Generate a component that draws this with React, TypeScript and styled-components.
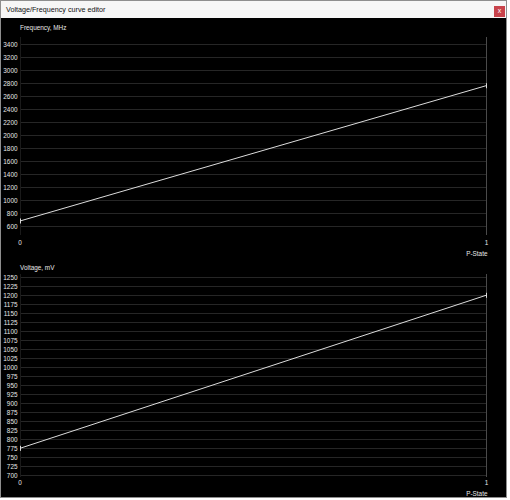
import styled, { createGlobalStyle } from "styled-components";

const GlobalStyle = createGlobalStyle`
  html, body {
    margin: 0;
    padding: 0;
    background: #ffffff;
  }
  body {
    font-family: "Liberation Sans", Arial, sans-serif;
  }
`;

const Window = styled.div`
  width: 505px;
  height: 496px;
  border: 1px solid #8e8e8e;
  display: flex;
  flex-direction: column;
  background: #000;
  overflow: hidden;
`;

const TitleBar = styled.div`
  height: 17px;
  flex: none;
  background: #f6f6f6;
  display: flex;
  align-items: center;
  justify-content: space-between;
  padding: 0 1px 0 5px;
`;

const TitleText = styled.span`
  font-size: 7.2px;
  color: #111;
  line-height: 10px;
  margin-top: 1px;
`;

const CloseButton = styled.div`
  width: 11px;
  height: 11px;
  margin-top: 3px;
  background: #c8434b;
  color: #fff;
  font-size: 7px;
  line-height: 10px;
  text-align: center;
`;

const Content = styled.div`
  flex: 1;
  display: flex;
  flex-direction: column;
  background: #000;
`;

const Panel = styled.div<{ $h: number }>`
  height: ${(p) => p.$h}px;
  flex: none;
  display: flex;
  flex-direction: column;
`;

const ChartTitle = styled.div`
  height: 9px;
  padding: 5px 0 0 19px;
  font-size: 6.4px;
  line-height: 9px;
  color: #e8e8e8;
`;

const Plot = styled.svg`
  display: block;
  flex: none;
  font-family: "Liberation Sans", Arial, sans-serif;
  font-size: 6.4px;
`;

type ChartProps = {
  title: string;
  height: number;
  ticks: number[];
  topVal: number;
  topY: number;
  bottomVal: number;
  bottomY: number;
  frameTop: number;
  frameBottom: number;
  xLabelY: number;
  start: number;
  end: number;
};

const LEFT = 19;
const RIGHT = 485;

function Chart(props: ChartProps) {
  const { ticks, topVal, topY, bottomVal, bottomY } = props;
  const svgH = props.height - 14;
  const toY = (v: number) =>
    bottomY + ((v - bottomVal) / (topVal - bottomVal)) * (topY - bottomY);
  const y0 = toY(props.start);
  const y1 = toY(props.end);

  return (
    <Panel $h={props.height}>
      <ChartTitle>{props.title}</ChartTitle>
      <Plot width={505} height={svgH} viewBox={`0 0 505 ${svgH}`}>
        {ticks.map((t) => (
          <g key={t}>
            <line
              x1={LEFT}
              x2={RIGHT}
              y1={Math.round(toY(t)) + 0.5}
              y2={Math.round(toY(t)) + 0.5}
              stroke="#262626"
              strokeWidth={1}
            />
            <text
              x={16.5}
              y={toY(t)}
              fill="#e8e8e8"
              textAnchor="end"
              dominantBaseline="central"
            >
              {t}
            </text>
          </g>
        ))}
        <line
          x1={LEFT + 0.5}
          x2={LEFT + 0.5}
          y1={props.frameTop}
          y2={props.frameBottom}
          stroke="#1a1a1a"
        />
        <line
          x1={RIGHT + 0.5}
          x2={RIGHT + 0.5}
          y1={props.frameTop}
          y2={props.frameBottom}
          stroke="#4a4a4a"
        />
        <line x1={LEFT} y1={y0} x2={RIGHT} y2={y1} stroke="#dcdcdc" strokeWidth={1} />
        <line x1={LEFT + 0.5} y1={y0 - 2.5} x2={LEFT + 0.5} y2={y0 + 2.5} stroke="#dcdcdc" />
        <line x1={RIGHT + 0.5} y1={y1 - 2.5} x2={RIGHT + 0.5} y2={y1 + 2.5} stroke="#dcdcdc" />
        <text
          x={LEFT}
          y={props.xLabelY}
          fill="#e8e8e8"
          textAnchor="middle"
          dominantBaseline="central"
        >
          0
        </text>
        <text
          x={RIGHT + 0.5}
          y={props.xLabelY}
          fill="#e8e8e8"
          textAnchor="middle"
          dominantBaseline="central"
        >
          1
        </text>
        <text
          x={RIGHT + 1.5}
          y={props.xLabelY + 11}
          fill="#e8e8e8"
          textAnchor="end"
          dominantBaseline="central"
        >
          P-State
        </text>
      </Plot>
    </Panel>
  );
}

const range = (from: number, to: number, step: number) => {
  const out: number[] = [];
  for (let v = from; v >= to; v -= step) out.push(v);
  return out;
};

export default function App() {
  return (
    <>
      <GlobalStyle />
      <Window>
        <TitleBar>
          <TitleText>Voltage/Frequency curve editor</TitleText>
          <CloseButton>x</CloseButton>
        </TitleBar>
        <Content>
          <Chart
            title="Frequency, MHz"
            height={240}
            ticks={range(3400, 600, 200)}
            topVal={3400}
            topY={12}
            bottomVal={600}
            bottomY={194}
            frameTop={5}
            frameBottom={203}
            xLabelY={210}
            start={677}
            end={2758}
          />
          <Chart
            title="Voltage, mV"
            height={239}
            ticks={range(1250, 700, 25)}
            topVal={1250}
            topY={5.3}
            bottomVal={700}
            bottomY={203.3}
            frameTop={2}
            frameBottom={205}
            xLabelY={210}
            start={775}
            end={1200}
          />
        </Content>
      </Window>
    </>
  );
}
